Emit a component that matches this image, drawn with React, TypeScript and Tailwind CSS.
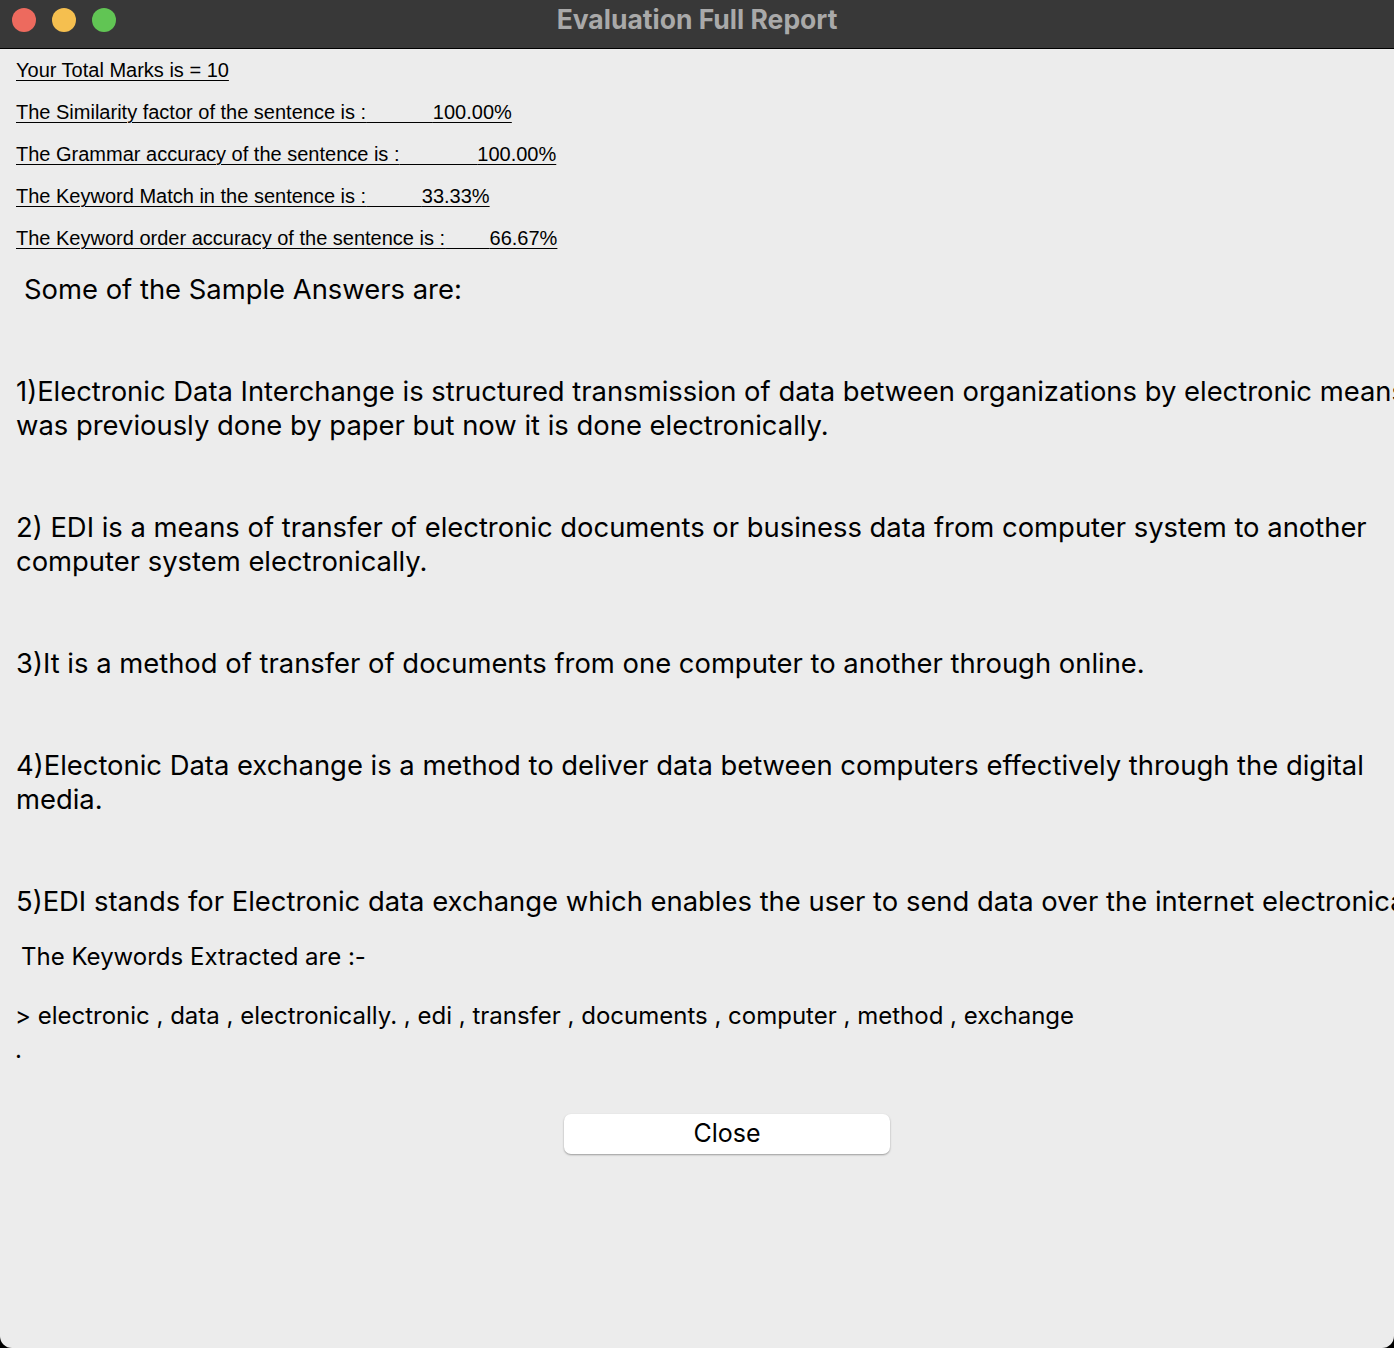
import React from 'react';

const scores = [
  { label: 'Your Total Marks is = 10', gap: '', value: '' },
  { label: 'The Similarity factor of the sentence is :', gap: '            ', value: '100.00%' },
  { label: 'The Grammar accuracy of the sentence is :', gap: '              ', value: '100.00%' },
  { label: 'The Keyword Match in the sentence is :', gap: '          ', value: '33.33%' },
  { label: 'The Keyword order accuracy of the sentence is :', gap: '        ', value: '66.67%' },
];

const answers: string[][] = [
  [
    '1)Electronic Data Interchange is structured transmission of data between organizations by electronic means. It',
    'was previously done by paper but now it is done electronically.',
  ],
  [
    '2) EDI is a means of transfer of electronic documents or business data from computer system to another',
    'computer system electronically.',
  ],
  ['3)It is a method of transfer of documents from one computer to another through online.'],
  [
    '4)Electonic Data exchange is a method to deliver data between computers effectively through the digital',
    'media.',
  ],
  ['5)EDI stands for Electronic data exchange which enables the user to send data over the internet electronically.'],
];

const keywords = ['electronic', 'data', 'electronically.', 'edi', 'transfer', 'documents', 'computer', 'method', 'exchange'];

const TitleBar: React.FC = () => (
  <div className="relative flex h-[49px] border-b border-black bg-[#383838]">
    <div className="mt-[8px] flex gap-[16px] pl-[12px]">
      <span className="h-[24px] w-[24px] rounded-full bg-[#ed6a5e]" />
      <span className="h-[24px] w-[24px] rounded-full bg-[#f5bf4f]" />
      <span className="h-[24px] w-[24px] rounded-full bg-[#61c554]" />
    </div>
    <div className="absolute inset-x-0 top-0 flex h-[40px] items-center justify-center pointer-events-none">
      <span className="font-['Inter',sans-serif] text-[26.5px] font-bold text-[#a9a9a9]">Evaluation Full Report</span>
    </div>
  </div>
);

export default function App() {
  return (
    <div className="h-[1348px] w-[1394px] bg-black font-['Inter','Liberation_Sans',sans-serif] text-black">
      <div className="flex h-full flex-col overflow-hidden rounded-b-[12px] bg-[#ececec]">
        <TitleBar />

        <div className="px-[16px] font-['Liberation_Sans',Arial,sans-serif]">
          {scores.map((s) => (
            <div key={s.label} className="flex h-[42px] items-center">
              <span className="whitespace-pre text-[20px] underline decoration-1 underline-offset-[3px]">
                {s.label}
                {s.gap}
                {s.value}
              </span>
            </div>
          ))}
        </div>

        <div className="mt-[13px] whitespace-nowrap text-[27.4px] leading-[34px]">
          <p className="pl-[24px]">Some of the Sample Answers are:</p>
          {answers.map((lines, i) => (
            <div key={i} className="mt-[68px] pl-[16px]">
              {lines.map((l) => (
                <p key={l}>{l}</p>
              ))}
            </div>
          ))}
        </div>

        <p className="mt-[22px] pl-[21px] text-[24px] leading-[34px]">The Keywords Extracted are :-</p>
        <div className="mt-[25px] pl-[15px] text-[24px] leading-[34px]">
          <p>&gt; {keywords.join(' , ')}</p>
          <p>.</p>
        </div>

        <div className="mt-[47px] flex justify-center">
          <button className="ml-[60px] h-[40px] w-[326px] rounded-[7px] bg-white text-[25px] shadow-[0_1px_2px_rgba(0,0,0,0.35)]">
            Close
          </button>
        </div>
      </div>
    </div>
  );
}
